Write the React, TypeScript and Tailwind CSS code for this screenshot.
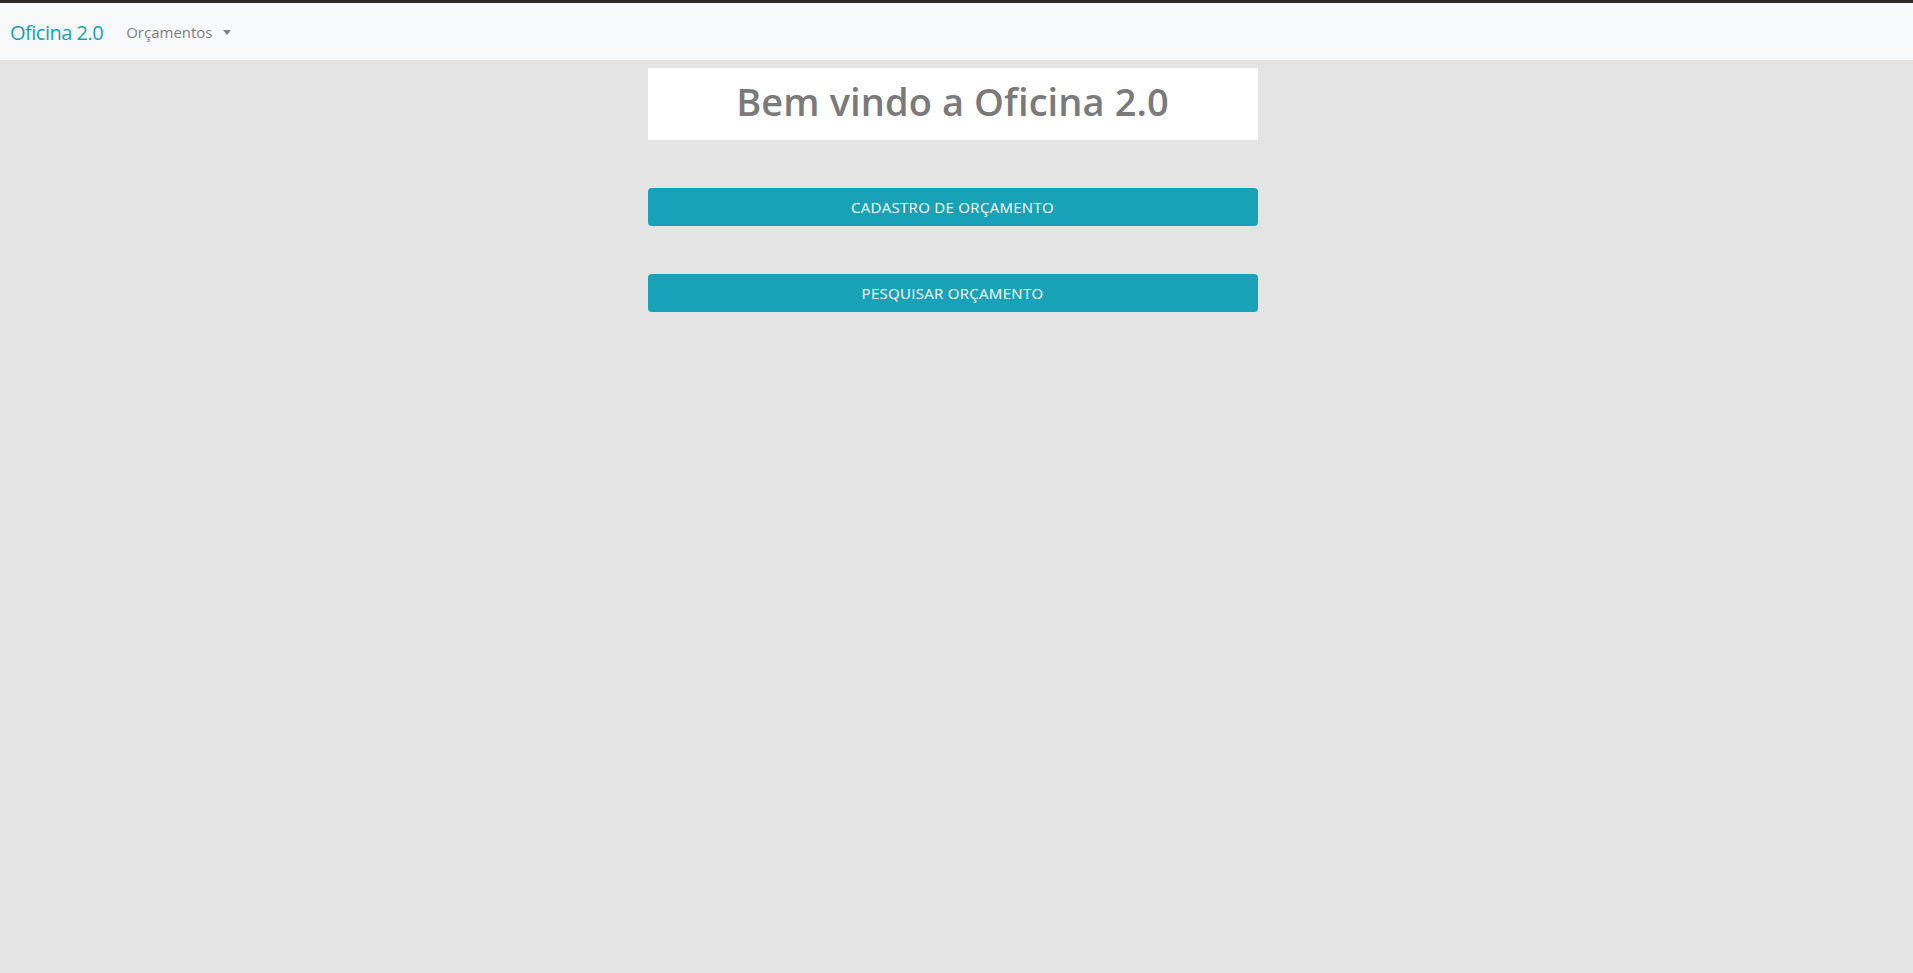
export default function App() {
  return (
    <div
      className="min-h-[973px] bg-[#e4e4e4]"
      style={{ fontFamily: '"Open Sans", "Noto Sans", sans-serif' }}
    >
      <div className="h-[3px] bg-[#2b2b2b]" />
      <nav className="h-[57px] bg-[#f8f9fa] flex items-center px-[10px] pt-[2px]">
        <a className="text-[20px] text-[#17a2b8] tracking-[-0.5px] mr-[23px]">
          Oficina 2.0
        </a>
        <div className="flex items-center text-[15px] text-[#808080] tracking-[0px]">
          Orçamentos
          <span className="ml-[10px] w-0 h-0 border-l-[4px] border-r-[4px] border-t-[5px] border-l-transparent border-r-transparent border-t-[#808080]" />
        </div>
      </nav>

      <main className="pr-[8px]">
        <div className="mx-auto w-[610px] flex flex-col">
          <div className="mt-[8px] h-[72px] bg-white flex items-center justify-center pb-[5px]">
            <h1 className="text-[38px] font-semibold text-[#7a7a7a] tracking-[0.1px]">
              Bem vindo a Oficina 2.0
            </h1>
          </div>
          <button className="mt-[48px] h-[38px] rounded-[4px] bg-[#17a2b8] text-white text-[15px] tracking-[0.3px]">
            CADASTRO DE ORÇAMENTO
          </button>
          <button className="mt-[48px] h-[38px] rounded-[4px] bg-[#17a2b8] text-white text-[15px] tracking-[0.3px]">
            PESQUISAR ORÇAMENTO
          </button>
        </div>
      </main>
    </div>
  );
}
